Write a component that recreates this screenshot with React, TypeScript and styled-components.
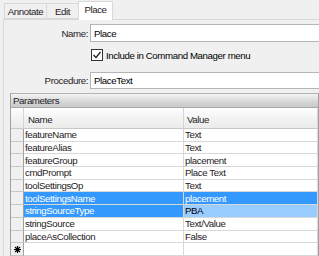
import React from 'react';
import styled, { createGlobalStyle } from 'styled-components';

const GlobalStyle = createGlobalStyle`
  html, body {
    margin: 0;
    padding: 0;
    background: #f0f0f0;
  }
`;

interface Param {
  name: string
  value: string
  selected?: 'full' | 'partial'
}

const params: Param[] = [
  { name: 'featureName', value: 'Text' },
  { name: 'featureAlias', value: 'Text' },
  { name: 'featureGroup', value: 'placement' },
  { name: 'cmdPrompt', value: 'Place Text' },
  { name: 'toolSettingsOp', value: 'Text' },
  { name: 'toolSettingsName', value: 'placement', selected: 'full' },
  { name: 'stringSourceType', value: 'PBA', selected: 'partial' },
  { name: 'stringSource', value: 'Text/Value' },
  { name: 'placeAsCollection', value: 'False' },
];

const SWindow = styled.div`
  width: 319px;
  height: 256px;
  overflow: hidden;
  background: #f0f0f0;
  font-family: "Liberation Sans", Arial, sans-serif;
  font-size: 9.7px;
  letter-spacing: -0.4px;
  color: #1f1b24;
  display: flex;
  flex-direction: column;
`;

const STabStrip = styled.div`
  height: 19px;
  display: flex;
  align-items: flex-end;
  padding-left: 4px;
  flex-shrink: 0;
`;

const STab = styled.div<{ $active?: boolean; $width: number }>`
  box-sizing: border-box;
  width: ${(p) => p.$width}px;
  height: ${(p) => (p.$active ? 19 : 16)}px;
  margin-bottom: ${(p) => (p.$active ? -1 : 0)}px;
  background: ${(p) => (p.$active ? '#ffffff' : '#f0f0f0')};
  border: 1px solid #d9d9d9;
  border-bottom: ${(p) => (p.$active ? 'none' : '1px solid #d9d9d9')};
  margin-right: ${(p) => (p.$active ? 0 : -1)}px;
  display: flex;
  align-items: center;
  justify-content: center;
  padding-bottom: ${(p) => (p.$active ? 3 : 0)}px;
  position: relative;
  z-index: ${(p) => (p.$active ? 1 : 0)};
`;

const SPanel = styled.div`
  flex: 1;
  margin-left: 3px;
  border-top: 1px solid #d9d9d9;
  border-left: 1px solid #d9d9d9;
  display: flex;
  flex-direction: column;
`;

const SFormRow = styled.div<{ $top: number }>`
  display: flex;
  align-items: center;
  margin-top: ${(p) => p.$top}px;
`;

const SLabel = styled.div`
  width: 84px;
  text-align: right;
  padding-right: 2px;
  flex-shrink: 0;
`;

const STextBox = styled.div<{ $height: number }>`
  flex: 1;
  box-sizing: border-box;
  height: ${(p) => p.$height}px;
  background: #ffffff;
  border: 1px solid #b5b5b5;
  border-right: none;
  display: flex;
  align-items: center;
  padding-left: 3px;
  color: #000;
`;

const SCheckRow = styled.label`
  display: flex;
  align-items: center;
  margin-top: 7px;
  margin-left: 87px;
  height: 12px;
  gap: 3px;
  color: #000;
`;

const SCheckBox = styled.span`
  box-sizing: border-box;
  width: 12px;
  height: 12px;
  border: 1px solid #333;
  background: #fff;
  display: flex;
  align-items: center;
  justify-content: center;
`;

const SGroup = styled.div`
  margin-top: 4px;
  margin-left: 6px;
  width: 307px;
  flex: 1;
  display: flex;
  flex-direction: column;
  border-left: 1px solid #a0a0a0;
  border-right: 1px solid #a0a0a0;
  border-top: 1px solid #b4b4b4;
`;

const SGroupHeader = styled.div`
  height: 13px;
  padding-left: 2px;
  display: flex;
  align-items: center;
  background: linear-gradient(#f4f4f4, #d6d6d6 60%, #c9c9c9);
  border-bottom: 1px solid #a8a8a8;
  flex-shrink: 0;
`;

const SGrid = styled.div`
  display: grid;
  grid-template-columns: 13px 160px 1fr;
  grid-auto-rows: 12.7px;
  grid-template-rows: 21px;
  background: #ffffff;
  flex: 1;
`;

const SHeadCell = styled.div<{ $pad?: number }>`
  box-sizing: border-box;
  background: linear-gradient(#ffffff, #f3f3f3 50%, #ebebeb);
  border-right: 1px solid #d5d5d5;
  border-bottom: 1px solid #c8c8c8;
  display: flex;
  align-items: center;
  padding-left: ${(p) => p.$pad ?? 0}px;
  padding-top: 3px;
`;

const SRowHead = styled.div`
  box-sizing: border-box;
  background: #f0f0f0;
  border-right: 1px solid #a0a0a0;
  border-bottom: 1px solid #c8c8c8;
  display: flex;
  align-items: center;
  justify-content: center;
`;

const SCell = styled.div<{ $bg?: string; $fg?: string }>`
  box-sizing: border-box;
  background: ${(p) => p.$bg ?? '#ffffff'};
  color: ${(p) => p.$fg ?? '#1f1b24'};
  border-right: 1px solid #d8d8d8;
  border-bottom: 1px solid #d8d8d8;
  display: flex;
  align-items: center;
  padding-left: 1px;
  white-space: nowrap;
  overflow: hidden;
`;

const SELECTED = '#3399ff';
const SELECTED_LIGHT = '#99ccff';

function NewRowMark() {
  return (
    <svg width="7" height="7" viewBox="0 0 7 7">
      <path d="M3.5 0v7M0 3.5h7M1 1l5 5M6 1L1 6" stroke="#000" strokeWidth="1.2" />
    </svg>
  );
}

export default function App() {
  return (
    <SWindow>
      <GlobalStyle />
      <STabStrip>
        <STab $width={43}>Annotate</STab>
        <STab $width={33}>Edit</STab>
        <STab $width={35} $active>Place</STab>
      </STabStrip>
      <SPanel>
        <SFormRow $top={4}>
          <SLabel>Name:</SLabel>
          <STextBox $height={18}>Place</STextBox>
        </SFormRow>
        <SCheckRow>
          <SCheckBox>
            <svg width="10" height="10" viewBox="0 0 10 10">
              <path d="M1.5 5l2.5 2.5L8.5 2" stroke="#222" strokeWidth="1.3" fill="none" />
            </svg>
          </SCheckBox>
          Include in Command Manager menu
        </SCheckRow>
        <SFormRow $top={11}>
          <SLabel>Procedure:</SLabel>
          <STextBox $height={17}>PlaceText</STextBox>
        </SFormRow>
        <SGroup>
          <SGroupHeader>Parameters</SGroupHeader>
          <SGrid>
            <SHeadCell />
            <SHeadCell $pad={4}>Name</SHeadCell>
            <SHeadCell $pad={3}>Value</SHeadCell>
            {params.map((p) => (
              <React.Fragment key={p.name}>
                <SRowHead />
                <SCell
                  $bg={p.selected ? SELECTED : undefined}
                  $fg={p.selected ? '#ffffff' : undefined}
                >
                  {p.name}
                </SCell>
                <SCell
                  $bg={p.selected === 'full' ? SELECTED : p.selected === 'partial' ? SELECTED_LIGHT : undefined}
                  $fg={p.selected === 'full' ? '#ffffff' : p.selected ? '#000' : undefined}
                >
                  {p.value}
                </SCell>
              </React.Fragment>
            ))}
            <SRowHead>
              <NewRowMark />
            </SRowHead>
            <SCell />
            <SCell />
          </SGrid>
        </SGroup>
      </SPanel>
    </SWindow>
  );
}
